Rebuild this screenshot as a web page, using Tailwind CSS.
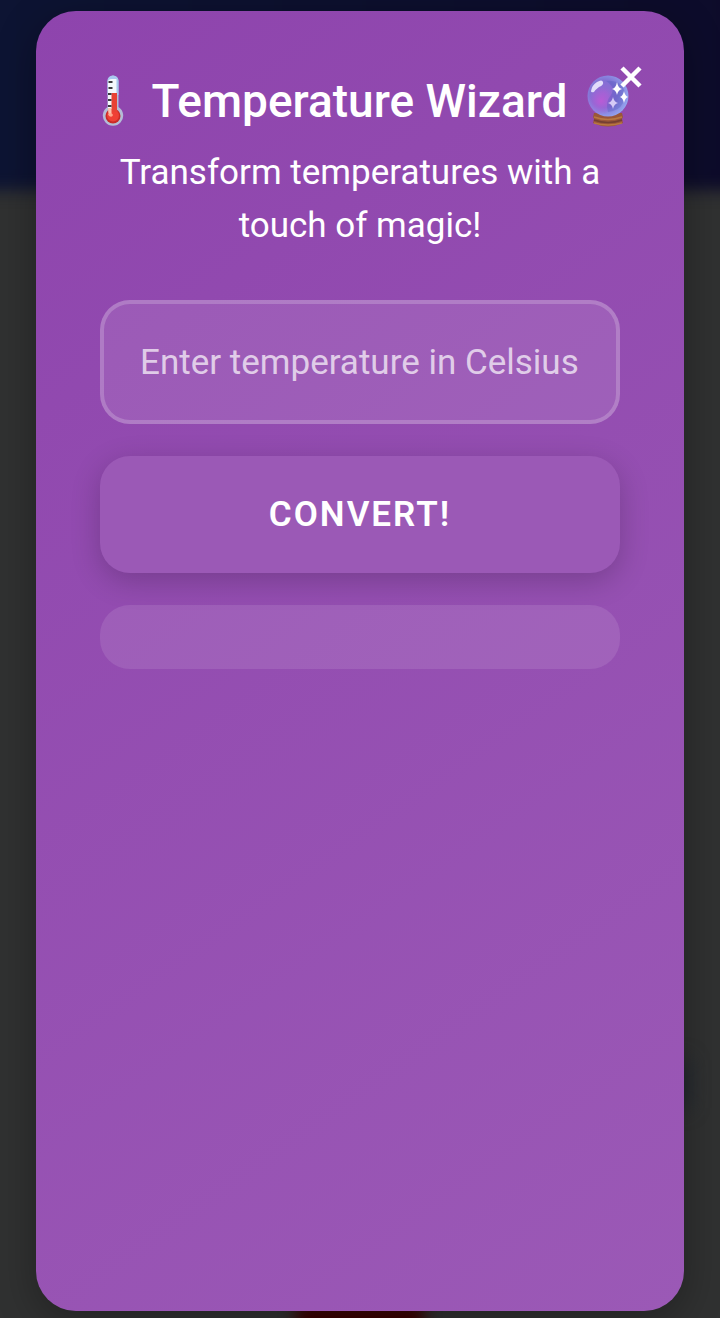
<!DOCTYPE html>
<html lang="en">
<head>
<meta charset="utf-8">
<meta name="viewport" content="width=device-width, initial-scale=1">
<title>Temperature Wizard</title>
<script src="https://cdn.jsdelivr.net/npm/@tailwindcss/browser@4"></script>
</head>
<body class="relative isolate flex min-h-screen flex-col overflow-x-hidden bg-[#303131] px-9 pt-[11px] pb-[7px] font-[Roboto,sans-serif] text-white">
  <!-- Blurred page behind the dialog -->
  <div class="absolute inset-0 -z-10 overflow-hidden" aria-hidden="true">
    <div class="absolute -inset-x-8 -top-8 h-[222px] bg-linear-to-r from-[#0d1433] to-[#0d0b2a] blur-[8px]"></div>
    <div class="absolute top-[1060px] right-8 h-12 w-8 bg-[#20262f] blur-[10px]"></div>
    <div class="absolute -bottom-4 left-1/2 h-8 w-32 -translate-x-1/2 bg-[#3a0000] blur-[8px]"></div>
  </div>

  <main role="dialog" aria-labelledby="title" class="relative flex-1 rounded-[40px] bg-linear-145 from-[#8e44ad] to-[#9b59b6] p-16 shadow-[0_10px_40px_rgba(0,0,0,0.3)]">
    <h1 id="title" class="-mx-4 flex h-[52px] items-center justify-center pl-3 text-[46px] leading-[52px] font-medium whitespace-nowrap">
      <svg class="mr-[27px] h-[52px] w-[22px] shrink-0" viewBox="0 0 22 52" aria-hidden="true">
        <path d="M5.500 32V6a5.500 5.500 0 0 1 11 0v26a10.200 10.200 0 1 1-11 0z" fill="#b4bcd6"/>
        <path d="M5.500 20V6a5.500 5.500 0 0 1 11 0v14z" fill="#a9c8f0"/>
        <path d="M6 34V7q0-3 4-3h4.500v14v16z" fill="#f4f8fc"/>
        <circle cx="11" cy="41" r="7.500" fill="#c92b27"/>
        <circle cx="11" cy="40.500" r="6" fill="#ef4035"/>
        <path d="M9.500 18H15v19H9.500z" fill="#e84235"/>
        <path d="M6 33h3.500v7H7q-1-2-1-7z" fill="#f9c4ae"/>
        <path d="M6 39q4-2 5 1-1 3-4 1z" fill="#ffa68c"/>
        <path d="M6.500 7h4M6.500 13h4M6 19h3.500M6 25h3.500M6 31h3.500" stroke="#3c3c40" stroke-width="2"/>
      </svg>
      <span>Temperature Wizard</span>
      <svg class="ml-[18px] h-[52px] w-11 shrink-0" viewBox="0 0 44 52" aria-hidden="true">
        <defs>
          <radialGradient id="orb" cx=".4" cy=".45" r=".6">
            <stop offset="0" stop-color="#9a66d4"/><stop offset=".55" stop-color="#8270d4"/><stop offset="1" stop-color="#93a4ee"/>
          </radialGradient>
          <radialGradient id="glow" cx=".5" cy=".5" r=".5">
            <stop offset="0" stop-color="#b95bd6"/><stop offset="1" stop-color="#b05bd6" stop-opacity="0"/>
          </radialGradient>
        </defs>
        <path d="M8 38h28l1 4-1 2 1 4q-15 7-30 0l1-4-1-2z" fill="#9a5639"/>
        <path d="M8 42q14 5 28 0M8 48q14 4 28 0" fill="none" stroke="#b87840" stroke-width="1.500"/>
        <path d="M8 45q14 5 28 0" fill="none" stroke="#743f32" stroke-width="1.500"/>
        <circle cx="22" cy="21" r="20.500" fill="url(#orb)"/>
        <ellipse cx="15" cy="26" rx="14" ry="14" fill="url(#glow)"/>
        <path d="M20 6q10 6 5 14-6 7-3 17 11-1 15-9 5-12-3-19-6-4-14-3z" fill="#4856ba" opacity=".3"/>
        <path d="M5 16q1-6 6-9 5-3 6 0 1 3-4 5-4 3-5 5-3 1-3-1z" fill="#e2dcfa"/>
        <path d="M31 7q1 6 5 7-4 1-5 6-1-5-5-6 4-1 5-7zM38 16q1 5 4 6-3 1-4 6-1-5-4-6 3-1 4-6z" fill="#fff"/>
        <path d="M27 22q1 5 5 6-4 1-5 6-1-5-5-6 4-1 5-6z" fill="#d6cbf6"/>
      </svg>
    </h1>
    <p class="mt-[19px] text-center text-[35px] leading-[53px]">Transform temperatures with a touch of magic!</p>

    <form class="mt-12 flex flex-col gap-8" onsubmit="return false">
      <input aria-label="Enter temperature in Celsius" placeholder="Enter temperature in Celsius" inputmode="decimal" class="h-[124px] w-full rounded-[30px] border-4 border-white/20 bg-white/10 px-9 text-[35px] text-white outline-none placeholder:text-white/70">
      <button type="submit" class="h-[117px] w-full rounded-[30px] bg-[#9b59b6] pt-[2px] text-[35px] font-semibold tracking-[2px] uppercase shadow-[0_8px_30px_rgba(0,0,0,0.2)]">Convert!</button>
      <output class="block rounded-[30px] bg-white/10 p-8"></output>
    </form>

    <button type="button" aria-label="Close" class="absolute top-[54px] right-[41px] flex h-6 w-6 items-center justify-center">
      <svg class="h-6 w-6" viewBox="0 0 24 24" fill="none" stroke="#fff" stroke-width="4.500" aria-hidden="true"><path d="M3 3l18 18M21 3L3 21"/></svg>
    </button>
  </main>
</body>
</html>
